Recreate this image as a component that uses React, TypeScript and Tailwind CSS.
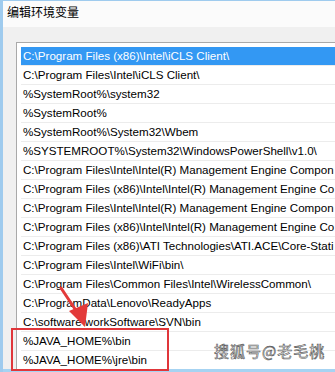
const rows = [
  'C:\\Program Files (x86)\\Intel\\iCLS Client\\',
  'C:\\Program Files\\Intel\\iCLS Client\\',
  '%SystemRoot%\\system32',
  '%SystemRoot%',
  '%SystemRoot%\\System32\\Wbem',
  '%SYSTEMROOT%\\System32\\WindowsPowerShell\\v1.0\\',
  'C:\\Program Files\\Intel\\Intel(R) Management Engine Compon',
  'C:\\Program Files (x86)\\Intel\\Intel(R) Management Engine Co',
  'C:\\Program Files\\Intel\\Intel(R) Management Engine Compon',
  'C:\\Program Files (x86)\\Intel\\Intel(R) Management Engine Co',
  'C:\\Program Files (x86)\\ATI Technologies\\ATI.ACE\\Core-Stati',
  'C:\\Program Files\\Intel\\WiFi\\bin\\',
  'C:\\Program Files\\Common Files\\Intel\\WirelessCommon\\',
  'C:\\ProgramData\\Lenovo\\ReadyApps',
  'C:\\software\\workSoftware\\SVN\\bin',
  '%JAVA_HOME%\\bin',
  '%JAVA_HOME%\\jre\\bin',
];

export default function App() {
  return (
    <div
      className="relative w-[335px] h-[372px] overflow-hidden bg-[#f0f0f0] border-l-[3px] border-t border-[#9fcbee] text-black"
      style={{ fontFamily: '"Liberation Sans", "Noto Sans CJK SC", sans-serif' }}
    >
      {/* title bar */}
      <div className="h-[26px] bg-[#fbfbfb] pl-[4px] pt-[4px] text-[12px] leading-[16px]">编辑环境变量</div>

      {/* list */}
      <div className="pl-[13px] pt-[15px]">
        <div className="bg-white border border-r-0 border-b-0 border-[#a9a9a9] pt-[4px] pl-[4px] h-[330px] overflow-hidden">
          {rows.map((r, i) => (
            <div
              key={i}
              className={
                'h-[19px] pl-[2px] text-[11.6px] leading-[18px] whitespace-nowrap overflow-hidden border-b border-[#ececec] ' +
                (i === 0 ? 'bg-[#3398f3] text-white' : '')
              }
            >
              {r}
            </div>
          ))}
        </div>
      </div>

      {/* bottom edge */}
      <div className="absolute left-0 right-0 bottom-0 h-[3px] bg-[#a6d3f2]" />

      {/* red highlight */}
      <div className="absolute left-[8px] top-[327px] w-[158px] h-[43px] border-2 border-[#e0363a]" />

      {/* arrow */}
      <svg className="absolute left-0 top-0" width="335" height="372" viewBox="0 0 335 372">
        <line x1="58" y1="287" x2="76" y2="314" stroke="#e33a3a" strokeWidth="3" strokeLinecap="round" />
        <polygon points="66,310 85,302 82,326" fill="#e33a3a" />
      </svg>

      {/* watermark */}
      <div
        className="absolute left-[211px] top-[340px] text-[15px] leading-[20px] text-white tracking-[1px]"
        style={{ WebkitTextStroke: '0.6px #555', fontFamily: '"Noto Sans CJK SC", sans-serif' }}
      >
        搜狐号@老毛桃
      </div>
    </div>
  );
}
